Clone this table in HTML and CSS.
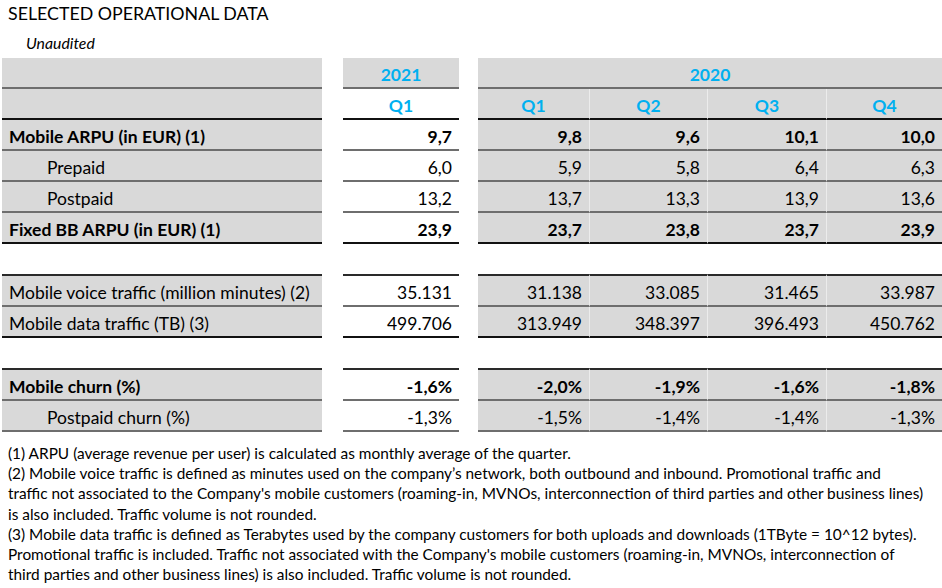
FILE: index.html
```html
<!DOCTYPE html>
<html lang="en">
<head>
<meta charset="utf-8">
<title>Selected operational data</title>
<link rel="stylesheet" href="styles.css">
</head>
<body>
<div class="page">
  <h1 class="title">SELECTED OPERATIONAL DATA</h1>
  <p class="subtitle">Unaudited</p>

  <div class="grid">
    <!-- header row 1 -->
    <div class="c lab g b-mid"></div><div class="sp"></div>
    <div class="c hd g b-mid">2021</div><div class="sp"></div>
    <div class="c hd g b-mid span4">2020</div>

    <!-- header row 2 -->
    <div class="c lab g b-dark"></div><div class="sp"></div>
    <div class="c hd w b-dark">Q1</div><div class="sp"></div>
    <div class="c hd g b-dark">Q1</div>
    <div class="c hd g b-dark vl">Q2</div>
    <div class="c hd g b-dark vl">Q3</div>
    <div class="c hd g b-dark vl">Q4</div>

    <!-- Mobile ARPU -->
    <div class="c lab g bold b-mid">Mobile ARPU (in EUR) (1)</div><div class="sp"></div>
    <div class="c num w bold b-mid">9,7</div><div class="sp"></div>
    <div class="c num g bold b-mid">9,8</div>
    <div class="c num g bold b-mid vl">9,6</div>
    <div class="c num g bold b-mid vl">10,1</div>
    <div class="c num g bold b-mid vl">10,0</div>

    <!-- Prepaid -->
    <div class="c lab g ind b-mid">Prepaid</div><div class="sp"></div>
    <div class="c num w b-mid">6,0</div><div class="sp"></div>
    <div class="c num g b-mid">5,9</div>
    <div class="c num g b-mid vl">5,8</div>
    <div class="c num g b-mid vl">6,4</div>
    <div class="c num g b-mid vl">6,3</div>

    <!-- Postpaid -->
    <div class="c lab g ind b-mid">Postpaid</div><div class="sp"></div>
    <div class="c num w b-mid">13,2</div><div class="sp"></div>
    <div class="c num g b-mid">13,7</div>
    <div class="c num g b-mid vl">13,3</div>
    <div class="c num g b-mid vl">13,9</div>
    <div class="c num g b-mid vl">13,6</div>

    <!-- Fixed BB -->
    <div class="c lab g bold b-dark">Fixed BB ARPU (in EUR) (1)</div><div class="sp"></div>
    <div class="c num w bold b-dark">23,9</div><div class="sp"></div>
    <div class="c num g bold b-dark">23,7</div>
    <div class="c num g bold b-dark vl">23,8</div>
    <div class="c num g bold b-dark vl">23,7</div>
    <div class="c num g bold b-dark vl">23,9</div>

    <div class="gap"></div>

    <!-- Voice -->
    <div class="c lab g b-mid t-dark">Mobile voice traffic (million minutes) (2)</div><div class="sp"></div>
    <div class="c num w b-mid t-dark">35.131</div><div class="sp"></div>
    <div class="c num g b-mid t-dark">31.138</div>
    <div class="c num g b-mid t-dark vl">33.085</div>
    <div class="c num g b-mid t-dark vl">31.465</div>
    <div class="c num g b-mid t-dark vl">33.987</div>

    <!-- Data -->
    <div class="c lab g b-dark">Mobile data traffic (TB) (3)</div><div class="sp"></div>
    <div class="c num w b-dark">499.706</div><div class="sp"></div>
    <div class="c num g b-dark">313.949</div>
    <div class="c num g b-dark vl">348.397</div>
    <div class="c num g b-dark vl">396.493</div>
    <div class="c num g b-dark vl">450.762</div>

    <div class="gap"></div>

    <!-- Churn -->
    <div class="c lab g bold b-mid t-dark">Mobile churn (%)</div><div class="sp"></div>
    <div class="c num w bold b-mid t-dark">-1,6%</div><div class="sp"></div>
    <div class="c num g bold b-mid t-dark">-2,0%</div>
    <div class="c num g bold b-mid t-dark vl">-1,9%</div>
    <div class="c num g bold b-mid t-dark vl">-1,6%</div>
    <div class="c num g bold b-mid t-dark vl">-1,8%</div>

    <!-- Postpaid churn -->
    <div class="c lab g ind b-mid">Postpaid churn (%)</div><div class="sp"></div>
    <div class="c num w b-mid">-1,3%</div><div class="sp"></div>
    <div class="c num g b-mid">-1,5%</div>
    <div class="c num g b-mid vl">-1,4%</div>
    <div class="c num g b-mid vl">-1,4%</div>
    <div class="c num g b-mid vl">-1,3%</div>
  </div>

  <div class="notes">
    <p>(1) ARPU (average revenue per user) is calculated as monthly average of the quarter.</p>
    <p>(2) Mobile voice traffic is defined as minutes used on the company’s network, both outbound and inbound. Promotional traffic and<br>traffic not associated to the Company's mobile customers (roaming-in, MVNOs, interconnection of third parties and other business lines)<br>is also included. Traffic volume is not rounded.</p>
    <p>(3) Mobile data traffic is defined as Terabytes used by the company customers for both uploads and downloads (1TByte = 10^12 bytes).<br>Promotional traffic is included. Traffic not associated with the Company's mobile customers (roaming-in, MVNOs, interconnection of<br>third parties and other business lines) is also included. Traffic volume is not rounded.</p>
  </div>
</div>
</body>
</html>
```

FILE: styles.css
```css
* { box-sizing: border-box; }

html, body {
  margin: 0;
  padding: 0;
  background: #ffffff;
}

body {
  font-family: Lato, "Open Sans", "Liberation Sans", sans-serif;
  color: #000;
}

.page {
  width: 942px;
  height: 588px;
  overflow: hidden;
  padding: 0 0 0 2px;
}

.title {
  margin: 0;
  padding: 2px 0 0 6px;
  font-size: 17.8px;
  font-weight: 400;
  line-height: 22px;
  height: 24px;
}

.subtitle {
  margin: 0;
  padding: 10px 0 0 24px;
  font-size: 15.8px;
  font-style: italic;
  line-height: 18px;
  height: 34px;
}

.grid {
  display: grid;
  grid-template-columns: 320px 21px 116px 19px 111px 118px 119px 116px;
  font-size: 17.5px;
}

.c {
  height: 31px;
  display: flex;
  align-items: center;
  border-bottom: 2px solid #6e6e6e;
  white-space: nowrap;
  padding-top: 3px;
}

.sp { height: 31px; }

.g { background: #d9d9d9; }
.w { background: #ffffff; }

.lab { padding-left: 7px; }
.ind { padding-left: 45px; }
.bold { font-weight: 700; }

.num { justify-content: flex-end; padding-right: 7px; }

.hd {
  justify-content: center;
  color: #00b0f0;
  font-weight: 700;
}

.span4 { grid-column: span 4; }

.vl { border-left: 1px solid #ececec; }

.b-mid { border-bottom-color: #6e6e6e; }
.b-dark { border-bottom-color: #111111; }

.t-dark {
  border-top: 2px solid #2a2a2a;
  height: 33px;
  padding-top: 4px;
}

.gap {
  grid-column: 1 / -1;
  height: 30px;
}

.notes {
  padding: 11px 0 0 6px;
  font-size: 15.4px;
  line-height: 20.2px;
}

.notes p { margin: 0; }
```
